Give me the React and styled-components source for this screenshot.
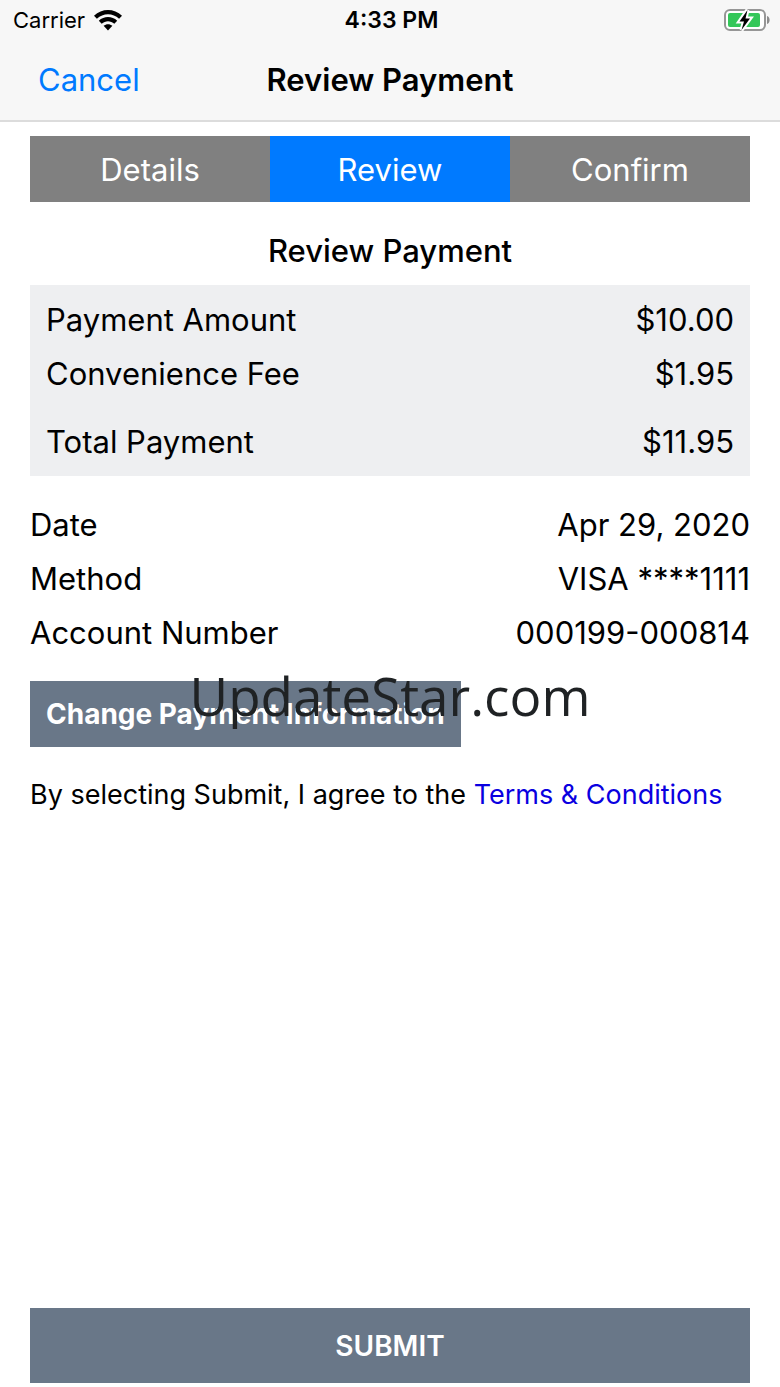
import React from "react";
import styled, { createGlobalStyle } from "styled-components";

const GlobalStyle = createGlobalStyle`
  * { box-sizing: border-box; }
  body {
    margin: 0;
    background: #fff;
    color: #000;
    font-family: Inter, "Liberation Sans", sans-serif;
    font-size: 31px;
    line-height: 38px;
  }
  button { font-family: inherit; border: 0; cursor: pointer; }
`;

const Screen = styled.div`
  position: relative;
  display: flex;
  flex-direction: column;
  min-height: 100vh;
`;

const Header = styled.header`
  background: #f7f7f7;
  border-bottom: 2px solid #dcdcdc;
`;

const StatusBar = styled.div`
  display: grid;
  grid-template-columns: 1fr auto 1fr;
  align-items: center;
  height: 40px;
  padding: 0 10px 0 13px;
  font-size: 22px;
  line-height: 28px;
`;

const Carrier = styled.div`
  display: flex;
  align-items: center;
  gap: 9px;
`;

const Clock = styled.time`
  font-size: 23px;
  font-weight: 600;
`;

const BatteryIcon = styled.svg`
  justify-self: end;
`;

const NavBar = styled.div`
  display: grid;
  grid-template-columns: 1fr auto 1fr;
  align-items: center;
  height: 80px;
  padding: 0 38px;
`;

const CancelButton = styled.button`
  justify-self: start;
  padding: 0;
  background: none;
  color: #007aff;
  font-size: 31px;
  line-height: 38px;
`;

const NavTitle = styled.h1`
  margin: 0;
  font-size: 31px;
  font-weight: 600;
`;

const Main = styled.main`
  flex: 1;
  display: flex;
  flex-direction: column;
  padding: 14px 30px 4px;
`;

const Tabs = styled.nav`
  display: grid;
  grid-template-columns: repeat(3, 1fr);
`;

const Tab = styled.button`
  height: 66px;
  padding: 0;
  background: ${(p) => (p.$active ? "#007aff" : "#808080")};
  color: #fff;
  font-size: 31px;
`;

const SectionTitle = styled.h2`
  margin: 30px 0 15px;
  text-align: center;
  font-size: 31px;
  font-weight: 500;
`;

const List = styled.dl`
  display: flex;
  flex-direction: column;
  gap: 16px;
  margin: 0;
  padding: ${(p) => (p.$shaded ? "16px 16px 15px" : "30px 0 29px")};
  background: ${(p) => (p.$shaded ? "#eeeff1" : "transparent")};
`;

const Row = styled.div`
  display: flex;
  justify-content: space-between;
  margin-top: ${(p) => (p.$total ? "14px" : "0")};
`;

const Label = styled.dt``;

const Value = styled.dd`
  margin: 0;
`;

const ActionButton = styled.button`
  align-self: ${(p) => (p.$wide ? "stretch" : "flex-start")};
  height: ${(p) => (p.$wide ? "75px" : "66px")};
  margin-top: ${(p) => (p.$wide ? "auto" : "0")};
  padding: 0 16px;
  background: #697788;
  color: #fff;
  font-size: 28px;
  font-weight: ${(p) => (p.$wide ? 600 : 700)};
`;

const Terms = styled.p`
  margin: 29px 0;
  font-size: 27px;
`;

const TermsLink = styled.a`
  color: #0a00e0;
  text-decoration: none;
`;

const Watermark = styled.div`
  position: absolute;
  inset: 4px 0 0;
  display: flex;
  align-items: center;
  justify-content: center;
  color: #1f2224;
  font-family: "Open Sans", "Noto Sans", sans-serif;
  font-size: 53px;
  pointer-events: none;
`;

const charges = [
  { label: "Payment Amount", value: "$10.00" },
  { label: "Convenience Fee", value: "$1.95" },
  { label: "Total Payment", value: "$11.95", total: true },
];

const details = [
  { label: "Date", value: "Apr 29, 2020" },
  { label: "Method", value: "VISA ****1111" },
  { label: "Account Number", value: "000199-000814" },
];

function Rows({ items, shaded }) {
  return (
    <List $shaded={shaded}>
      {items.map((item) => (
        <Row key={item.label} $total={item.total}>
          <Label>{item.label}</Label>
          <Value>{item.value}</Value>
        </Row>
      ))}
    </List>
  );
}

function Wifi() {
  return (
    <svg width="28" height="21" viewBox="0 0 28 21" aria-hidden="true">
      <path d="M0 5.8C7.8-1.9 20.2-1.9 28 5.8L25.1 8.8C18.9 2.7 9.1 2.7 2.9 8.8Z" />
      <path d="M4.8 10.8C10 5.8 18 5.8 23.2 10.8L20.3 13.8C16.7 10.4 11.3 10.4 7.7 13.8Z" />
      <path d="M9.6 15.8C12.2 13.6 15.8 13.6 18.4 15.8L14 20.6Z" />
    </svg>
  );
}

function Battery() {
  return (
    <BatteryIcon width="46" height="24" viewBox="0 0 46 24" role="img" aria-label="Battery charging">
      <rect x="1" y="2" width="40" height="20" rx="5" fill="#fff" stroke="#969696" strokeWidth="2" />
      <rect x="4" y="5" width="32" height="14" rx="2" fill="#34c759" />
      <path d="M43 8C46.500 9 46.500 15 43 16Z" fill="#8c8c8c" />
      <path d="M23.500 2L15.500 13.500H20L17.500 22L26 10.500H21.500Z" fill="#000" stroke="#fff" strokeWidth="4" paintOrder="stroke" />
    </BatteryIcon>
  );
}

export default function App() {
  return (
    <Screen>
      <GlobalStyle />
      <Header>
        <StatusBar>
          <Carrier>
            <span>Carrier</span>
            <Wifi />
          </Carrier>
          <Clock>4:33 PM</Clock>
          <Battery />
        </StatusBar>
        <NavBar>
          <CancelButton type="button">Cancel</CancelButton>
          <NavTitle>Review Payment</NavTitle>
        </NavBar>
      </Header>
      <Main>
        <Tabs aria-label="Payment steps">
          <Tab type="button">Details</Tab>
          <Tab type="button" $active aria-current="step">Review</Tab>
          <Tab type="button">Confirm</Tab>
        </Tabs>
        <SectionTitle>Review Payment</SectionTitle>
        <Rows items={charges} shaded />
        <Rows items={details} />
        <ActionButton type="button">Change Payment Information</ActionButton>
        <Terms>
          By selecting Submit, I agree to the <TermsLink href="#terms">Terms &amp; Conditions</TermsLink>
        </Terms>
        <ActionButton type="submit" $wide>SUBMIT</ActionButton>
      </Main>
      <Watermark>UpdateStar.com</Watermark>
    </Screen>
  );
}
